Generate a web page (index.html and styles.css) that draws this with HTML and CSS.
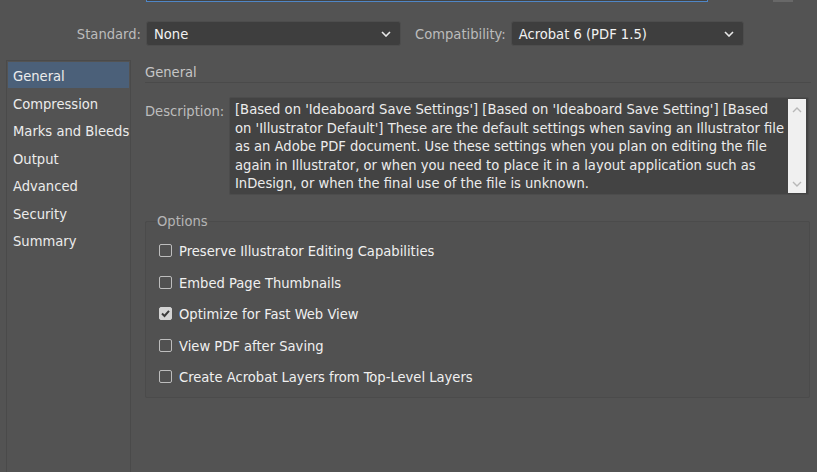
FILE: index.html
```html
<!DOCTYPE html>
<html>
<head>
<meta charset="utf-8">
<link rel="stylesheet" href="styles.css">
</head>
<body>
<div class="app">
  <div class="topstrip">
    <div class="name-field"></div>
    <div class="corner-btn"></div>
  </div>
  <div class="header-row">
    <span class="hlabel std-label">Standard:</span>
    <div class="select select-std"><span>None</span><svg class="chev" viewBox="0 0 10 6" width="10" height="6"><path d="M1 1 L5 5 L9 1" fill="none" stroke="#e8e8e8" stroke-width="1.6"/></svg></div>
    <span class="hlabel comp-label">Compatibility:</span>
    <div class="select select-comp"><span>Acrobat 6 (PDF 1.5)</span><svg class="chev" viewBox="0 0 10 6" width="10" height="6"><path d="M1 1 L5 5 L9 1" fill="none" stroke="#e8e8e8" stroke-width="1.6"/></svg></div>
  </div>
  <div class="main">
    <ul class="sidebar">
      <li class="item selected">General</li>
      <li class="item">Compression</li>
      <li class="item">Marks and Bleeds</li>
      <li class="item">Output</li>
      <li class="item">Advanced</li>
      <li class="item">Security</li>
      <li class="item">Summary</li>
    </ul>
    <div class="content">
      <div class="section-title">General</div>
      <div class="desc-row">
        <span class="desc-label">Description:</span>
        <div class="textarea">
          <div class="ta-text">[Based on 'Ideaboard Save Settings'] [Based on 'Ideaboard Save Setting'] [Based on 'Illustrator Default'] These are the default settings when saving an Illustrator file as an Adobe PDF document. Use these settings when you plan on editing the file again in Illustrator, or when you need to place it in a layout application such as InDesign, or when the final use of the file is unknown.</div>
          <div class="scrollbar">
            <svg viewBox="0 0 10 6" width="10" height="6"><path d="M1 5 L5 1 L9 5" fill="none" stroke="#b8b8b8" stroke-width="1.4"/></svg>
            <svg viewBox="0 0 10 6" width="10" height="6"><path d="M1 1 L5 5 L9 1" fill="none" stroke="#b8b8b8" stroke-width="1.4"/></svg>
          </div>
        </div>
      </div>
      <fieldset class="options">
        <legend>Options</legend>
        <div class="opt"><span class="cb"></span>Preserve Illustrator Editing Capabilities</div>
        <div class="opt"><span class="cb"></span>Embed Page Thumbnails</div>
        <div class="opt"><span class="cb checked"><svg viewBox="0 0 13 13" width="13" height="13"><path d="M3 6.5 L5.5 9 L10 3.8" fill="none" stroke="#3a3a3a" stroke-width="2"/></svg></span>Optimize for Fast Web View</div>
        <div class="opt"><span class="cb"></span>View PDF after Saving</div>
        <div class="opt"><span class="cb"></span>Create Acrobat Layers from Top-Level Layers</div>
      </fieldset>
    </div>
  </div>
</div>
</body>
</html>
```
FILE: styles.css
```css
html, body {
  margin: 0;
  padding: 0;
  background: #535353;
  height: 100%;
  overflow: hidden;
}
body {
  font-family: "DejaVu Sans Condensed", "DejaVu Sans", sans-serif;
  font-size: 14.6px;
  color: #ececec;
}
.app {
  width: 817px;
  height: 472px;
  display: flex;
  flex-direction: column;
}
.topstrip {
  height: 2px;
  display: flex;
  align-items: flex-end;
}
.name-field {
  margin-left: 146px;
  width: 562px;
  height: 2px;
  border-bottom: 1px solid #4f86c6;
  border-left: 1px solid #4f86c6;
  border-right: 1px solid #4f86c6;
  box-sizing: border-box;
  background: #434343;
}
.corner-btn {
  margin-left: 65px;
  width: 20px;
  height: 2px;
  background: #686868;
}
.header-row {
  display: flex;
  align-items: center;
  margin-top: 19px;
  height: 25px;
}
.hlabel {
  color: #bcbcbc;
}
.std-label {
  width: 141px;
  text-align: right;
  margin-right: 5px;
}
.select {
  height: 25px;
  box-sizing: border-box;
  background: #3e3e3e;
  border: 1px solid #4d4d4d;
  border-radius: 3px;
  display: flex;
  align-items: center;
  justify-content: space-between;
  padding: 0 9px 0 7px;
  color: #f2f2f2;
}
.select-std { width: 255px; }
.comp-label { margin-left: 14px; margin-right: 5px; }
.select-comp { width: 233px; }
.chev { display: block; }
.main {
  flex: 1;
  display: flex;
  margin-top: 14px;
}
.sidebar {
  list-style: none;
  margin: 0 0 0 6px;
  padding: 1px 1px 0 1px;
  width: 125px;
  box-sizing: border-box;
  border: 1px solid #4a4a4a;
  border-bottom: none;
  background: #535353;
}
.item {
  height: 27.5px;
  line-height: 28px;
  padding-left: 5px;
  white-space: nowrap;
  color: #ececec;
}
.item.selected {
  background: #4b6079;
  height: 26px;
  line-height: 27px;
  margin-bottom: 1.5px;
}
.content {
  flex: 1;
  margin-left: 14px;
  margin-right: 6px;
  display: flex;
  flex-direction: column;
}
.section-title {
  color: #c6c6c6;
  height: 22px;
  line-height: 23px;
  border-bottom: 1px solid #4a4a4a;
  padding-left: 0;
}
.desc-row {
  display: flex;
  margin-top: 14px;
}
.desc-label {
  color: #bdbdbd;
  width: 84px;
  padding-top: 4px;
  line-height: 20px;
}
.textarea {
  width: 580px;
  height: 98px;
  box-sizing: border-box;
  background: #434343;
  border: 1px solid #4c4c4c;
  border-radius: 2px;
  display: flex;
  padding: 2px 2px 2px 5px;
}
.ta-text {
  flex: 1;
  line-height: 18.5px;
  color: #ececec;
  padding-right: 2px;
}
.scrollbar {
  width: 18px;
  background: #f0f0f0;
  margin: -1px 0 -1px 0;
  display: flex;
  flex-direction: column;
  justify-content: space-between;
  align-items: center;
  padding: 8px 0 6px;
  box-sizing: border-box;
}
.scrollbar svg { display: block; }
.options {
  margin: 18px 1px 0 0;
  padding: 4px 0 4px 13px;
  border: 1px solid #4b4b4b;
  border-radius: 2px;
  background: #515151;
  box-sizing: border-box;
}
.options legend {
  color: #b5b5b5;
  padding: 0;
  margin-left: -2px;
  line-height: 16px;
}
.opt {
  display: flex;
  align-items: center;
  height: 31.5px;
  color: #f0f0f0;
  white-space: nowrap;
}
.opt:first-of-type { margin-top: 2px; }
.cb {
  width: 13px;
  height: 13px;
  box-sizing: border-box;
  border: 1px solid #bdbdbd;
  border-radius: 2px;
  margin-right: 7px;
  flex: none;
  display: flex;
}
.cb.checked {
  background: #d4d4d4;
  border-color: #d4d4d4;
}
.cb svg { display: block; margin: -1px; }
```
